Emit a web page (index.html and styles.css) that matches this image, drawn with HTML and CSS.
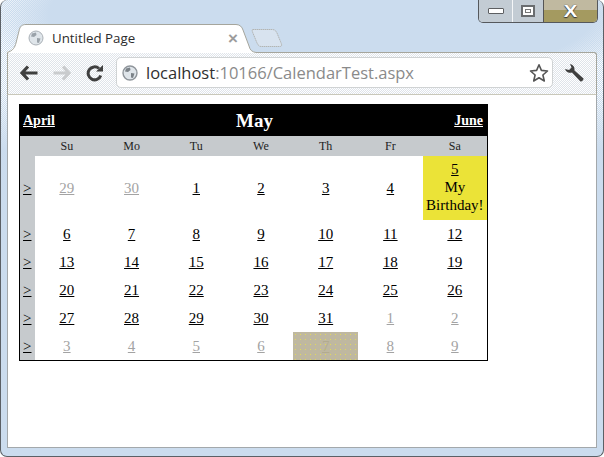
FILE: index.html
```html
<!DOCTYPE html>
<html lang="en">
<head>
<meta charset="utf-8">
<title>Untitled Page</title>
<link rel="stylesheet" href="styles.css">
</head>
<body>
<div class="window">
  <div class="caption">
    <div class="caption-buttons">
      <div class="cb cb-min"><span class="min-glyph"></span></div>
      <div class="cb cb-max"><span class="max-glyph"></span></div>
      <div class="cb cb-close"><span class="close-glyph">X</span></div>
    </div>
  </div>
  <div class="tabstrip">
    <div class="tab">
      <svg class="tab-shape" width="249" height="29" viewBox="0 0 249 29"><path d="M0 29 L0 28 C6 27 8 23 9 19 L12 7 C13 2 15 1 19 1 L229 1 C233 1 235 3 236 6 L242 22 C243 26 245 28 249 28 L249 29Z" fill="#fff"/><path d="M0 28.500 C6 27 8 23 9 19 L12 7 C13 2 15 .5 19 .5 L229 .5 C233 .5 235 3 236 6 L242 22 C243 26 245 28 249 28.500" fill="none" stroke="#a5a59c"/></svg>
      <svg class="globe" width="16" height="16" viewBox="0 0 16 16"><circle cx="8" cy="8" r="7" fill="#dfe5ea" stroke="#aab0b6"/><path d="M4 3.500 L8 2.500 L8.500 5 L6 7 L3 6.500Z M9 8 L12.500 8.500 L11 13 L9 12.500Z" fill="#9aa2a9"/></svg>
      <span class="tab-title">Untitled Page</span>
      <span class="tab-close">×</span>
    </div>
    <svg class="newtab" width="32" height="20" viewBox="0 0 32 20"><path d="M1.500 1.500 L21 1.500 C24 1.500 25 3 26 5 L30.500 16 C31 18 30 18.500 29 18.500 L10 18.500 C8 18.500 7 17 6 15 L1.500 4 C1 2.500 1 1.500 1.500 1.500Z" fill="#d8e3ef" stroke="#b3b5b3" stroke-dasharray="1.500 .5"/></svg>
  </div>
  <div class="toolbar">
    <svg class="tool" width="20" height="18" viewBox="0 0 20 18"><path d="M9 2.500 L3 9 L9 15.500 M3.500 9 L18.500 9" fill="none" stroke="#3f3f3f" stroke-width="3.200"/></svg>
    <svg class="tool" width="20" height="18" viewBox="0 0 20 18"><path d="M11 2.500 L17 9 L11 15.500 M16.500 9 L1.500 9" fill="none" stroke="#c9cbcd" stroke-width="3.200"/></svg>
    <svg class="tool" width="20" height="18" viewBox="0 0 20 18"><path d="M15.800 11.500 A6.500 6.500 0 1 1 14 4.500" fill="none" stroke="#3f3f3f" stroke-width="3"/><path d="M11 7.500 L18 7.500 L18 1Z" fill="#3f3f3f"/></svg>
    <div class="omnibox">
      <svg class="globe" width="16" height="16" viewBox="0 0 16 16"><circle cx="8" cy="8" r="7" fill="#dfe5ea" stroke="#8f959b" stroke-width="1.400"/><path d="M4 3.500 L8 2.500 L8.500 5 L6 7 L3 6.500Z M9 8 L12.500 8.500 L11 13 L9 12.500Z" fill="#7b8288"/></svg>
      <span class="url"><span class="host">localhost</span>:10166/CalendarTest.aspx</span>
      <svg class="star" width="20" height="20" viewBox="0 0 20 20"><path d="M10 1.800 L12.400 7.400 L18.500 8 L13.900 12 L15.300 18 L10 14.800 L4.700 18 L6.100 12 L1.500 8 L7.600 7.400Z" fill="#fff" stroke="#555" stroke-width="1.600" stroke-linejoin="round"/></svg>
    </div>
    <svg class="wrench" width="21" height="20" viewBox="0 0 21 20"><path d="M6 1 A5.500 5.500 0 0 1 10.500 7.500 L19.500 15.500 C20 16.500 18 19 16.500 18.500 L8 9.500 A5.500 5.500 0 0 1 1 6 L5 7 L7.500 4.500 Z" fill="#3f3f3f"/></svg>
  </div>
  <div class="content">
    <table class="calendar">
      <colgroup>
        <col class="col-sel"><col><col><col><col><col><col><col>
      </colgroup>
      <tr class="title-row">
        <td colspan="8">
          <div class="title-bar">
            <a href="#" class="nav-link">April</a>
            <span class="month">May</span>
            <a href="#" class="nav-link">June</a>
          </div>
        </td>
      </tr>
      <tr class="head-row">
        <th class="sel-head"></th><th>Su</th><th>Mo</th><th>Tu</th><th>We</th><th>Th</th><th>Fr</th><th>Sa</th>
      </tr>
      <tr class="week first-week">
        <td class="sel"><a href="#">&gt;</a></td>
        <td><a href="#" class="other">29</a></td><td><a href="#" class="other">30</a></td>
        <td><a href="#">1</a></td><td><a href="#">2</a></td><td><a href="#">3</a></td><td><a href="#">4</a></td>
        <td class="birthday"><a href="#">5</a><br>My Birthday!</td>
      </tr>
      <tr class="week">
        <td class="sel"><a href="#">&gt;</a></td>
        <td><a href="#">6</a></td><td><a href="#">7</a></td><td><a href="#">8</a></td><td><a href="#">9</a></td><td><a href="#">10</a></td><td><a href="#">11</a></td><td><a href="#">12</a></td>
      </tr>
      <tr class="week">
        <td class="sel"><a href="#">&gt;</a></td>
        <td><a href="#">13</a></td><td><a href="#">14</a></td><td><a href="#">15</a></td><td><a href="#">16</a></td><td><a href="#">17</a></td><td><a href="#">18</a></td><td><a href="#">19</a></td>
      </tr>
      <tr class="week">
        <td class="sel"><a href="#">&gt;</a></td>
        <td><a href="#">20</a></td><td><a href="#">21</a></td><td><a href="#">22</a></td><td><a href="#">23</a></td><td><a href="#">24</a></td><td><a href="#">25</a></td><td><a href="#">26</a></td>
      </tr>
      <tr class="week">
        <td class="sel"><a href="#">&gt;</a></td>
        <td><a href="#">27</a></td><td><a href="#">28</a></td><td><a href="#">29</a></td><td><a href="#">30</a></td><td><a href="#">31</a></td><td><a href="#" class="other">1</a></td><td><a href="#" class="other">2</a></td>
      </tr>
      <tr class="week">
        <td class="sel"><a href="#">&gt;</a></td>
        <td><a href="#" class="other">3</a></td><td><a href="#" class="other">4</a></td><td><a href="#" class="other">5</a></td><td><a href="#" class="other">6</a></td>
        <td class="selected"><a href="#">7</a></td>
        <td><a href="#" class="other">8</a></td><td><a href="#" class="other">9</a></td>
      </tr>
    </table>
  </div>
</div>
</body>
</html>
```
FILE: styles.css
```css
* { box-sizing: border-box; }
html, body { margin: 0; padding: 0; }
body { width: 604px; height: 457px; overflow: hidden; background: #fff; }
a { color: #000; }

.window {
  width: 604px;
  height: 457px;
  display: flex;
  flex-direction: column;
  background:
    radial-gradient(ellipse 340px 85px at 320px 15px, #cbdcee 80%, rgba(203,220,238,0) 100%),
    linear-gradient(rgba(203,220,238,0) 90px, #cbdcee 150px),
    repeating-conic-gradient(#ffffff 0 25%, #c9dbee 0 50%) 0 0 / 2px 2px;
  border: 1px solid #5b6066;
  border-top: 0;
  border-radius: 7px;
  overflow: hidden;
  font-family: "Open Sans", sans-serif;
}

.caption { height: 24px; flex: none; display: flex; justify-content: flex-end; padding-right: 5px; }
.caption-buttons {
  width: 120px;
  height: 23px;
  display: flex;
  border: 1px solid #55585c;
  border-top: 0;
  border-radius: 0 0 5px 5px;
  overflow: hidden;
}
.cb { display: flex; align-items: center; justify-content: center; height: 100%; }
.cb-min { width: 34px; background: #c3ccd4; border-right: 1px solid #f4f6f8; }
.cb-max { width: 31px; background: #c3ccd4; border-right: 1px solid #555; }
.cb-close { flex: 1; background: linear-gradient(#c0b9a0 0 45%, #a49a60 45% 100%); }
.min-glyph { width: 16px; height: 6px; background: #fff; border: 1px solid #5d5f62; border-radius: 1px; }
.max-glyph { width: 14px; height: 12px; background: #fff; border: 2px solid #6a6d70; box-shadow: inset 0 0 0 2px #fff, inset 0 0 0 3px #777; }
.close-glyph { color: #fff; font: 700 17px/1 "Liberation Sans", sans-serif; text-shadow: 0 0 1px #333, 0 1px 1px #333; transform: scaleX(1.2); }

.tabstrip { height: 28px; flex: none; display: flex; align-items: flex-start; padding-left: 6px; position: relative; z-index: 1; }
.tab {
  position: relative;
  width: 249px;
  height: 29px;
  flex: none;
  display: flex;
  align-items: center;
  padding: 0 18px 1px 21px;
}
.tab-shape { position: absolute; left: 0; top: 0; }
.tab .globe { position: relative; flex: none; margin-right: 8px; }
.tab-title { position: relative; font-size: 13.300px; color: #2c2c2c; flex: 1; white-space: nowrap; }
.tab-close { position: relative; color: #9c9c9c; font: 700 17px/1 "Liberation Sans", sans-serif; }
.newtab { flex: none; margin: 4px 0 0 -5px; }

.toolbar {
  height: 43px;
  flex: none;
  display: flex;
  align-items: center;
  margin: 0 6px;
  padding: 0 6px 2px 11px;
  gap: 13px;
  background: repeating-conic-gradient(#ffffff 0 25%, #dfe4ea 0 50%) 0 0 / 2px 2px;
  border: 1px solid #a5a59c;
  border-bottom-color: #c9c8ba;
  border-top-right-radius: 3px;
}
.tool { flex: none; }
.omnibox {
  flex: none;
  width: 437px;
  height: 31px;
  margin-left: -2px;
  margin-right: -2px;
  display: flex;
  align-items: center;
  gap: 8px;
  padding: 0 3px 0 5px;
  background: #fff;
  border: 1px solid #d0d3d4;
  border-radius: 5px;
}
.omnibox .globe { flex: none; }
.url { flex: 1; font-size: 16.500px; color: #8a8a8a; white-space: nowrap; }
.host { color: #2f2f2f; }
.star, .wrench { flex: none; }

.content {
  flex: 1;
  margin: 0 6px 8px;
  padding: 9px 0 0 11px;
  background: #fff;
  border: 1px solid #a3a8ab;
  border-top: 0;
}

.calendar {
  width: 469px;
  height: 257px;
  border-collapse: collapse;
  table-layout: fixed;
  border: 1px solid #000;
  font-family: "Liberation Serif", serif;
  font-size: 15px;
  color: #000;
}
.col-sel { width: 15px; }
.calendar td, .calendar th { padding: 0; text-align: center; }
.title-row td { height: 31px; background: #000; }
.title-bar { display: flex; align-items: center; justify-content: space-between; padding: 0 4px 0 3px; height: 31px; color: #fff; }
.nav-link { color: #fff; font-weight: 700; font-size: 14px; }
.month { font-weight: 700; font-size: 19px; }
.head-row th { height: 20px; background: #c6cacd; font-weight: 400; font-size: 12px; color: #222; }
.week { height: 28px; }
.first-week { height: 64px; }
.sel { background: #c6cacd; font-size: 15px; }
.calendar a.other { color: #a3a3a3; }
.calendar .birthday { background: #ebe337; line-height: 18px; padding-bottom: 3px; }
.selected {
  background-color: #bfb8a0;
  background-image: radial-gradient(circle, #e2d95a 0.8px, transparent 1px);
  background-size: 5px 5px;
}
.selected a { color: #b2ab90; }
```
